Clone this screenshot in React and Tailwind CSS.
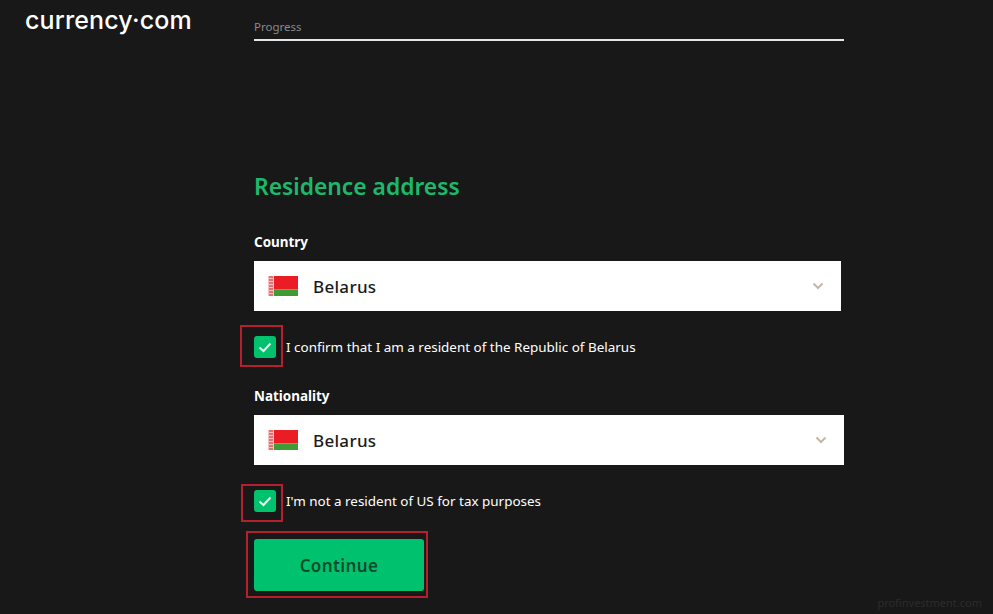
const uiFont = "font-['Noto_Sans','Open_Sans',sans-serif]";

function Flag() {
  return (
    <svg width="30" height="20" viewBox="0 0 30 20" className="shrink-0">
      <rect width="30" height="13.5" fill="#ea1c24" />
      <rect y="13.5" width="30" height="6.5" fill="#3f9c35" />
      <rect width="6" height="20" fill="#f6c0c0" />
      <path d="M1 1h4M1 4h4M1 7h4M1 10h4M1 13h4M1 16h4M1 19h4" stroke="#dc5a5a" strokeWidth="1.4" />
    </svg>
  );
}

function SelectBox({ width, chevronRight }) {
  return (
    <div className={`flex h-[50px] items-center bg-white pl-[14px] ${width}`}>
      <Flag />
      <span className="ml-[15px] pt-[2px] text-[17px] font-medium tracking-[0.3px] text-[#1a1a1a]">Belarus</span>
      <svg width="12" height="8" viewBox="0 0 12 8" className={`ml-auto ${chevronRight}`}>
        <path d="M1.5 1.5 6 6l4.5-4.5" fill="none" stroke="#c4b8a4" strokeWidth="2" />
      </svg>
    </div>
  );
}

function CheckRow({ label, boxClass }) {
  return (
    <div className="flex items-center">
      <div className="relative h-[22px] w-[22px] rounded-[3px] bg-[#00c26e]">
        <svg width="22" height="22" viewBox="0 0 22 22">
          <path d="M5.5 11.5 9.5 15l7-7.5" fill="none" stroke="#e4f8ee" strokeWidth="2" />
        </svg>
        <div className={`absolute border-2 border-[#b4202c] ${boxClass}`} />
      </div>
      <span className="ml-[10px] text-[13.45px] text-white">{label}</span>
    </div>
  );
}

export default function App() {
  return (
    <div className={`relative h-[614px] w-[993px] overflow-hidden bg-[#181818] ${uiFont}`}>
      <div className="flex">
        <div className="w-[254px] pl-[25px] pt-[4px]">
          <span className="font-['Inter',sans-serif] text-[25px] font-medium leading-[32px] tracking-[0.15px] text-white">
            currency·com
          </span>
        </div>
        <div className="w-[590px] pt-[18px]">
          <div className="text-[11.5px] leading-[18px] text-[#8a8a8a]">Progress</div>
          <div className="mt-[3px] h-[2px] bg-[#e6e6e6]" />
        </div>
      </div>

      <div className="ml-[254px] w-[590px] pt-[131px]">
        <h1 className="text-[22.8px] font-semibold leading-[30px] text-[#1cb86c]">Residence address</h1>

        <div className="mt-[30px] text-[13.45px] font-bold leading-[20px] text-white">Country</div>
        <div className="mt-[9px]">
          <SelectBox width="w-[587px]" chevronRight="mr-[17px]" />
        </div>
        <div className="mt-[25px]">
          <CheckRow label="I confirm that I am a resident of the Republic of Belarus" boxClass="-left-[14px] -top-[11px] h-[42px] w-[43px]" />
        </div>

        <div className="mt-[28px] text-[13.45px] font-bold leading-[20px] text-white">Nationality</div>
        <div className="mt-[9px]">
          <SelectBox width="w-[590px]" chevronRight="mr-[17px]" />
        </div>
        <div className="mt-[25px]">
          <CheckRow label="I'm not a resident of US for tax purposes" boxClass="-left-[13px] -top-[6px] h-[38px] w-[42px]" />
        </div>

        <div className="relative mt-[27px] h-[52px] w-[170px]">
          <button className="h-full w-full rounded-[3px] bg-[#00c26e] pt-[2px] text-[17px] font-semibold tracking-[0.4px] text-[#0e4a2c]">
            Continue
          </button>
          <div className="absolute -left-[8px] -top-[8px] h-[67px] w-[182px] border-2 border-[#b4202c]" />
        </div>
      </div>

      <div className="absolute bottom-[3px] right-[11px] text-[11px] text-[#2c2c2c]">profinvestment.com</div>
    </div>
  );
}
